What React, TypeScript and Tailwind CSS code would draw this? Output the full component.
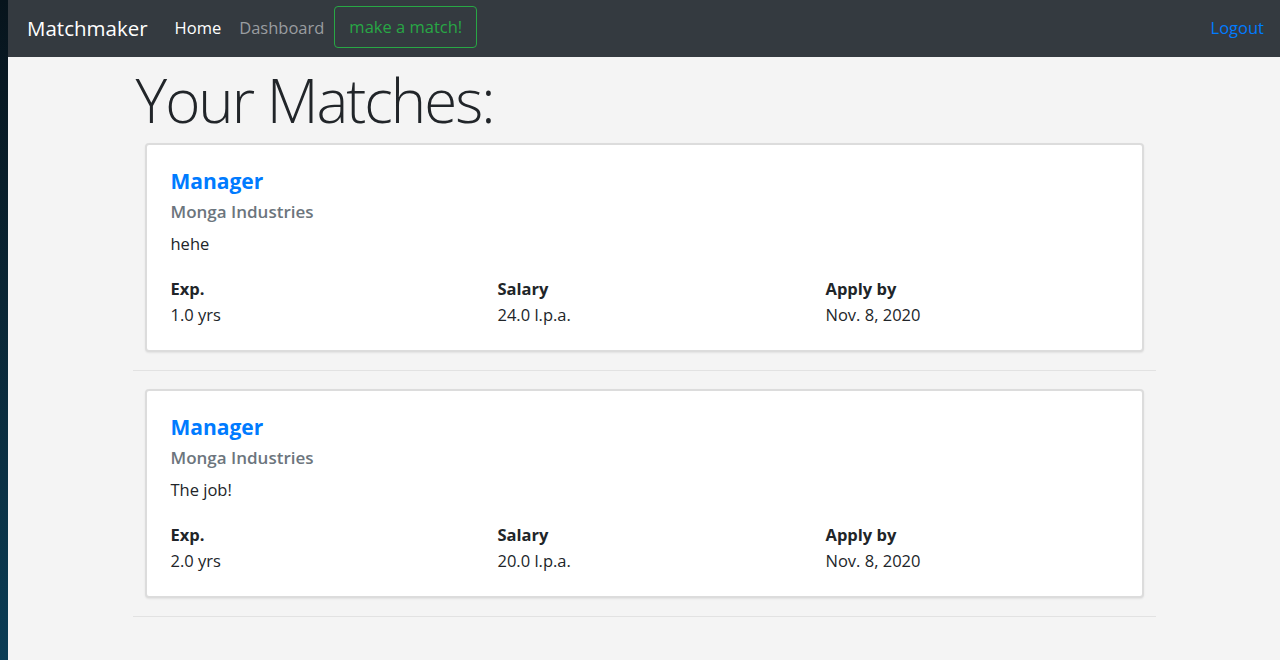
const matches = [
  { title: 'Manager', company: 'Monga Industries', desc: 'hehe', exp: '1.0 yrs', salary: '24.0 l.p.a.', applyBy: 'Nov. 8, 2020' },
  { title: 'Manager', company: 'Monga Industries', desc: 'The job!', exp: '2.0 yrs', salary: '20.0 l.p.a.', applyBy: 'Nov. 8, 2020' },
]

function MatchCard({ m }: { m: (typeof matches)[number] }) {
  return (
    <div className="mx-3 h-[209px] rounded-[4px] border-2 border-[#dcdcdc] bg-white pl-[23px] pr-[20px] pt-[23px] shadow-[0_1px_2px_rgba(0,0,0,0.08)]">
      <h5 className="ml-[1px] text-[21px] font-bold leading-[26px] text-[#007bff]">{m.title}</h5>
      <h6 className="ml-[1px] mt-[6px] text-[17px] font-semibold leading-[24px] text-[#6c757d]">{m.company}</h6>
      <p className="ml-[1px] mt-[8px] text-[16.5px] leading-[24px] text-[#212529]">{m.desc}</p>
      <div className="ml-[1px] mt-[20px] grid grid-cols-[327px_328px_1fr] text-[16.5px] leading-[26px] text-[#212529]">
        <div>
          <div className="font-bold">Exp.</div>
          <div>{m.exp}</div>
        </div>
        <div>
          <div className="font-bold">Salary</div>
          <div>{m.salary}</div>
        </div>
        <div>
          <div className="font-bold">Apply by</div>
          <div>{m.applyBy}</div>
        </div>
      </div>
    </div>
  )
}

export default function App() {
  return (
    <div className="flex min-h-[660px] font-['Open_Sans',sans-serif]">
      <div className="w-2 shrink-0 bg-gradient-to-b from-[#07141c] to-[#0b3d55]" />
      <div className="flex min-w-0 flex-1 flex-col bg-[#f4f4f4]">
        <nav className="flex h-[57px] items-center bg-[#343a40] pl-[19px] pr-[14px]">
          <span className="text-[20.5px] text-white">Matchmaker</span>
          <span className="ml-[27px] text-[16.5px] text-white">Home</span>
          <span className="ml-[18px] text-[16.5px] text-[#9a9da0]">Dashboard</span>
          <button className="ml-[10px] mb-[3px] h-[42px] rounded-[4px] border border-[#28a745] px-[14px] text-[16.5px] text-[#28a745]">
            make a match!
          </button>
          <span className="ml-auto mr-[2px] text-[16.5px] text-[#007bff]">Logout</span>
        </nav>
        <main className="mx-auto w-[1023px]">
          <h1 className="ml-[3px] pt-[5px] text-[60px] font-light leading-[76px] tracking-[-2px] text-[#212529]">Your Matches:</h1>
          <div className="mt-[5px]">
            {matches.map((m, i) => (
              <div key={i}>
                <MatchCard m={m} />
                <hr className="my-[18px] border-t border-[#e2e2e2]" />
              </div>
            ))}
          </div>
        </main>
      </div>
    </div>
  )
}
